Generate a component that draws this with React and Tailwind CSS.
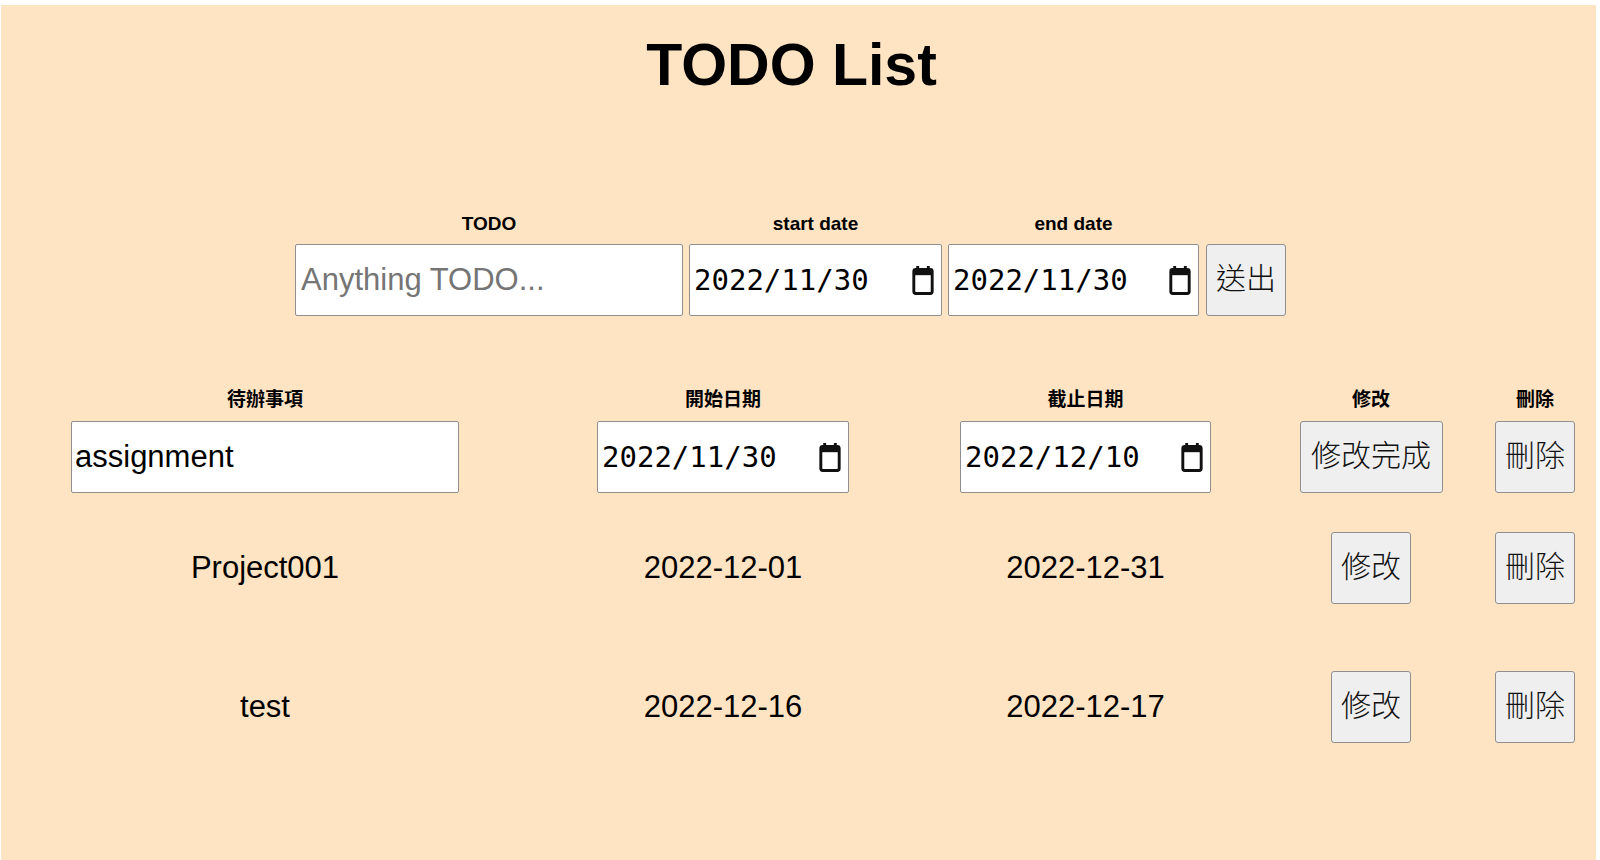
import { useState } from 'react';

const todos = [
  { id: 1, name: 'Project001', start: '2022-12-01', end: '2022-12-31' },
  { id: 2, name: 'test', start: '2022-12-16', end: '2022-12-17' },
];

const CalendarIcon = () => (
  <svg width="22" height="29" viewBox="0 0 22 30" className="shrink-0">
    <rect x="4" y="0" width="3" height="5" fill="#111" />
    <rect x="15" y="0" width="3" height="5" fill="#111" />
    <rect x="1.5" y="3.5" width="19" height="25" rx="2" fill="none" stroke="#111" strokeWidth="3" />
    <rect x="1.5" y="3.5" width="19" height="6" fill="#111" />
  </svg>
);

const DateBox = ({ value, className = '' }) => (
  <div className={`h-[72px] bg-white border border-[#8f8f8f] rounded-[2px] flex items-center justify-between pl-[4px] pr-[7px] ${className}`}>
    <span className="font-['DejaVu_Sans_Mono',monospace] text-[29px] text-black leading-none">{value}</span>
    <CalendarIcon />
  </div>
);

const Btn = ({ children, className = '' }) => (
  <button className={`h-[72px] pb-[8px] bg-[#efefef] border border-[#8f8f8f] rounded-[3px] font-['Noto_Sans_CJK_TC',sans-serif] font-light text-[30px] text-[#111] leading-none ${className}`}>
    {children}
  </button>
);

const Label = ({ children }) => (
  <div className="h-[20px] flex items-center justify-center text-[19px] font-bold leading-none text-black">{children}</div>
);

export default function App() {
  const [todo, setTodo] = useState('');
  const [editName, setEditName] = useState('assignment');

  return (
    <div className="min-h-screen bg-white pt-[5px] pl-px pr-[4px] font-['Liberation_Sans','Noto_Sans_CJK_TC',sans-serif]">
      <div className="h-[855px] bg-[#ffe4c4] flex flex-col">
        {/* title */}
        <h1 className="mt-[31px] pr-[14px] text-center text-[59px] font-bold leading-none text-black">TODO List</h1>

        {/* add form */}
        <div className="mt-[118px] pr-[16px] flex justify-center items-end gap-[6px]">
          <div className="flex flex-col items-center gap-[11px]">
            <Label>TODO</Label>
            <input
              value={todo}
              onChange={(e) => setTodo(e.target.value)}
              placeholder="Anything TODO..."
              className="w-[388px] h-[72px] bg-white border border-[#8f8f8f] rounded-[2px] pl-[5px] text-[31px] text-black placeholder:text-[#757575] outline-none"
            />
          </div>
          <div className="flex flex-col items-center gap-[11px]">
            <Label>start date</Label>
            <DateBox value="2022/11/30" className="w-[253px]" />
          </div>
          <div className="flex flex-col items-center gap-[11px]">
            <Label>end date</Label>
            <DateBox value="2022/11/30" className="w-[251px]" />
          </div>
          <Btn className="w-[80px] ml-px">送出</Btn>
        </div>

        {/* list */}
        <div className="mt-[73px] ml-[4px] flex flex-col">
          <div className="grid grid-cols-[520px_396px_329px_242px_86px] items-center">
            <Label>待辦事項</Label>
            <Label>開始日期</Label>
            <Label>截止日期</Label>
            <Label>修改</Label>
            <Label>刪除</Label>
          </div>

          <div className="mt-[12px] grid grid-cols-[520px_396px_329px_242px_86px] items-center justify-items-center">
            <input
              value={editName}
              onChange={(e) => setEditName(e.target.value)}
              className="w-[388px] h-[72px] bg-white border border-[#8f8f8f] rounded-[2px] pl-[3px] text-[31px] text-black outline-none"
            />
            <DateBox value="2022/11/30" className="w-[252px]" />
            <DateBox value="2022/12/10" className="w-[251px]" />
            <Btn className="w-[143px]">修改完成</Btn>
            <Btn className="w-[80px]">刪除</Btn>
          </div>

          {todos.map((t, i) => (
            <div
              key={t.id}
              className={`${i === 0 ? 'mt-[39px]' : 'mt-[67px]'} grid grid-cols-[520px_396px_329px_242px_86px] items-center justify-items-center h-[72px] text-[31px] text-black`}
            >
              <span>{t.name}</span>
              <span>{t.start}</span>
              <span>{t.end}</span>
              <Btn className="w-[80px]">修改</Btn>
              <Btn className="w-[80px]">刪除</Btn>
            </div>
          ))}
        </div>
      </div>
    </div>
  );
}
